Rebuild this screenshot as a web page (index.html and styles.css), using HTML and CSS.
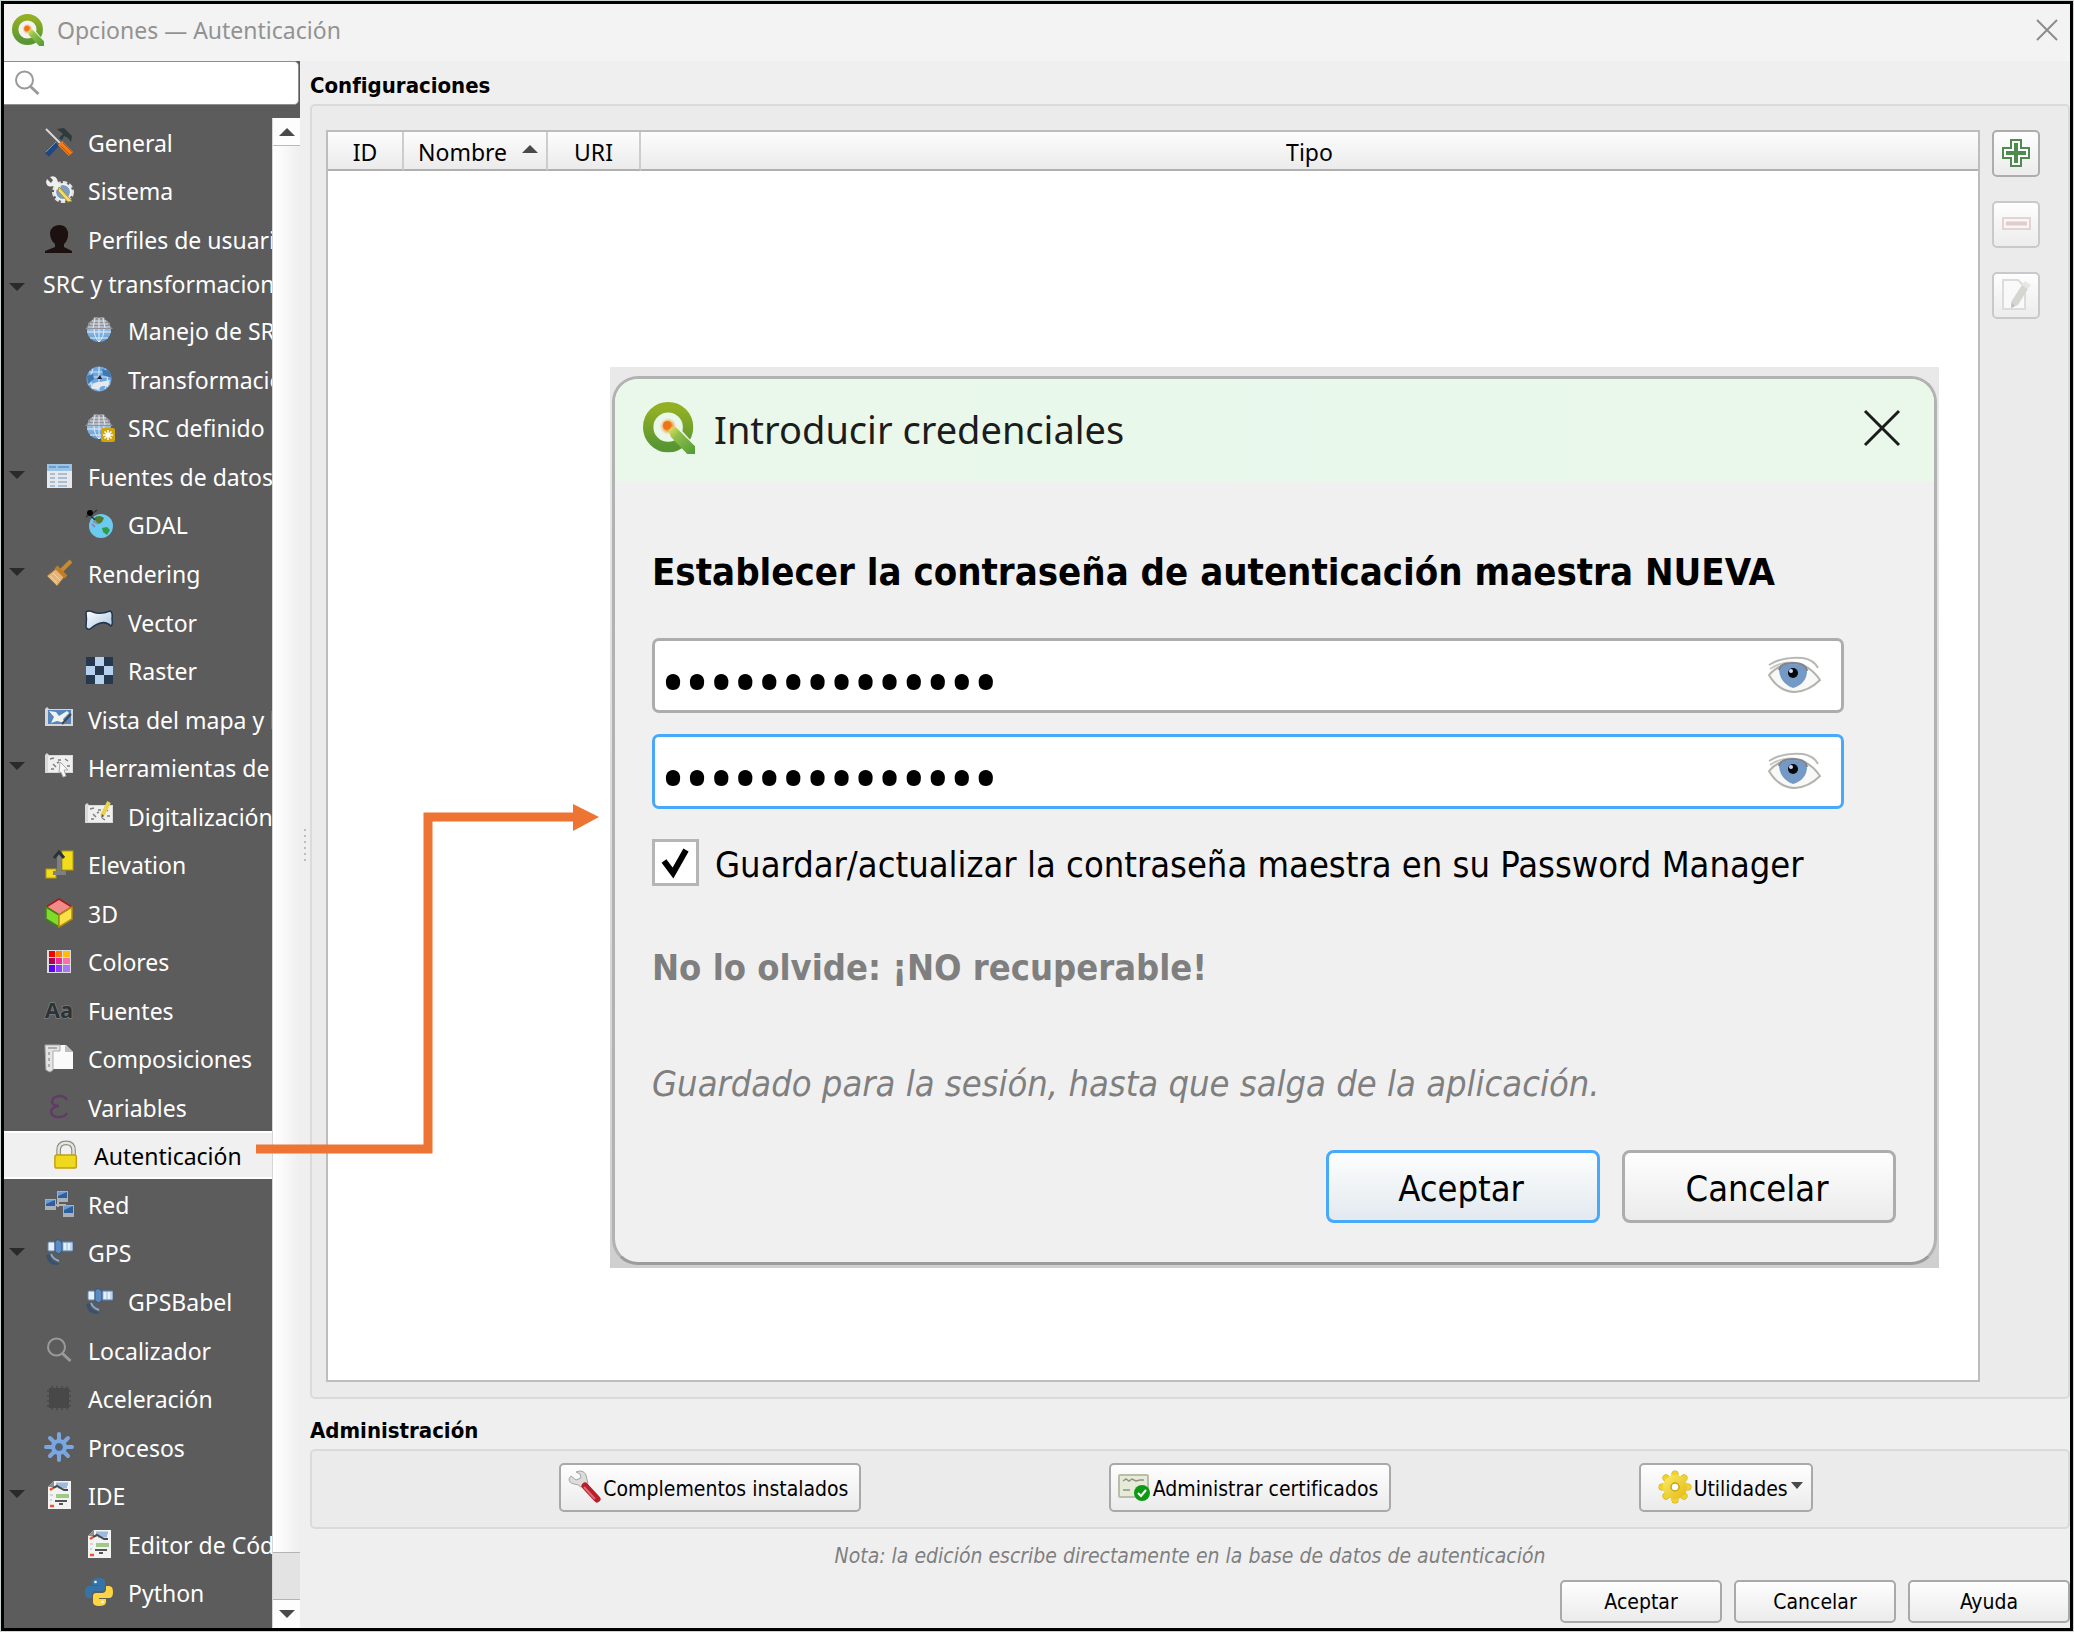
FILE: index.html
```html
<!DOCTYPE html>
<html lang="es">
<head>
<meta charset="utf-8">
<title>Opciones — Autenticación</title>
<link rel="stylesheet" href="styles.css">
</head>
<body>
<svg class="defs" aria-hidden="true">
  <defs>
    <linearGradient id="g-q" x1="0" y1="0" x2="0" y2="1"><stop offset="0" stop-color="#93b023"/><stop offset="1" stop-color="#589632"/></linearGradient>
    <linearGradient id="g-tail" x1="0" y1="0" x2="1" y2="1"><stop offset="0" stop-color="#f7e85a"/><stop offset=".35" stop-color="#8fbf4a"/><stop offset="1" stop-color="#4f9a35"/></linearGradient>
    <radialGradient id="g-spot"><stop offset="0" stop-color="#f07c1d"/><stop offset=".5" stop-color="#f39a4a"/><stop offset="1" stop-color="#f8c98f" stop-opacity="0"/></radialGradient>
    <linearGradient id="g-globe" x1="0" y1="0" x2="0" y2="1"><stop offset="0" stop-color="#c3d9ee"/><stop offset="1" stop-color="#5d9bd6"/></linearGradient>
    <linearGradient id="g-vec" x1="0" y1="0" x2="1" y2="1"><stop offset="0" stop-color="#ffffff"/><stop offset="1" stop-color="#a9c4e2"/></linearGradient>
    <linearGradient id="g-gear" x1="0" y1="0" x2="1" y2="1"><stop offset="0" stop-color="#f8ec6a"/><stop offset="1" stop-color="#e6b90f"/></linearGradient>
    <symbol id="qgis" viewBox="1 1 30 30">
      <circle cx="15.500" cy="15.500" r="11.500" fill="none" stroke="url(#g-q)" stroke-width="6"/>
      <path d="M19 18 26 31h6l-1-5-8-9z" class="qgis-gap"/>
      <circle cx="15.500" cy="15" r="5" fill="url(#g-spot)"/>
      <path d="M15 15 20 15.500 31 26.500V31H26.500L17 21z" fill="url(#g-tail)"/>
      <circle cx="15" cy="14.500" r="2.500" fill="#ee7418"/>
    </symbol>
    <symbol id="globe" viewBox="0 0 28 28">
      <circle cx="14" cy="14" r="12" fill="url(#g-globe)"/>
      <path d="M5 22 23 22M2 16H26M9 13q0 8 5 13M19 13q0 8-5 13M14 13V26" stroke="#e3effa" stroke-width="1" fill="none"/>
      <path d="M0 13 3 10V7l4-2 2-4h4l1 1 1-1h4l2 4 4 2v3l3 3z" fill="#8d929b"/>
      <path d="M3 11H25M5 8H23M7 5H21M10 2 8 12M14 2V12M18 2 20 12" stroke="#dfe2e6" stroke-width="1.200" fill="none"/>
    </symbol>
    <symbol id="sat" viewBox="0 0 28 28">
      <rect x="3" y="4" width="7" height="9" rx="1" fill="#e7f0fa" stroke="#5f87b5" stroke-width="1"/>
      <rect x="17" y="4" width="11" height="9" rx="1" fill="#bcd4ee" stroke="#5f87b5" stroke-width="1"/>
      <path d="M20 5V12M24 5V12" stroke="#f4f9ff" stroke-width="1.500"/>
      <path d="M10 3q3-3 6 0l1 2v8l-3 3-4-2z" fill="#5b88bd" stroke="#2e5684" stroke-width="1"/>
      <path d="M6 16q2 5 8 7" stroke="#86aed8" stroke-width="2" fill="none"/>
      <path d="M1 17q1 10 12 10l1-2q-9-1-9-9z" fill="#39516d"/>
    </symbol>
    <symbol id="script" viewBox="0 0 28 28">
      <path d="M3 6 9 0H26V28H3z" fill="#f3f3f3"/>
      <path d="M3 6 9 0V6z" fill="#8e8e8e"/>
      <path d="M11 3H23M13 6H22" stroke="#9fb9dc" stroke-width="3"/>
      <path d="M8 7 12 5 19 9H23" stroke="#4b4b4b" stroke-width="2" fill="none"/>
      <path d="M11 14H24M11 16H24" stroke="#9dcb85" stroke-width="2"/>
      <path d="M10 20H22M14 23H18" stroke="#555" stroke-width="2"/>
      <path d="M5 9 8 7M5 25H9" stroke="#e8562e" stroke-width="2.500"/>
      <path d="M5 14H8M5 19H7" stroke="#b5b5b5" stroke-width="1"/>
    </symbol>
    <symbol id="lens" viewBox="0 0 28 28">
      <circle cx="11.500" cy="11" r="8.500" fill="none" stroke="#9a9a9a" stroke-width="2"/>
      <path d="M17.500 17.500 25.500 25" stroke="#9a9a9a" stroke-width="3"/>
    </symbol>
    <symbol id="map" viewBox="0 0 28 28">
      <path d="M0 5 2 3 4 5H28V23H0z" fill="#d9d9d9"/>
      <rect x="3" y="6" width="24" height="16" fill="#efefef"/>
      <path d="M5 9 9 8M13 10H16M8 14 11 17M20 9 23 11M6 19H9M17 18 20 20M22 16H25M12 13 14 12" stroke="#7f7f7f" stroke-width="1.500"/>
    </symbol>
    <symbol id="eye" viewBox="0 0 54 40">
      <path d="M2 9Q16 0 36 2 47 4 51 12" fill="none" stroke="#b9b8b4" stroke-width="2"/>
      <path d="M3 13Q14 5 30 7" fill="none" stroke="#c9c8c4" stroke-width="2"/>
      <path d="M2 19Q10 9 26 7 42 8 53 24 42 35 28 36 12 36 2 19z" fill="#f8f8f6" stroke="#b3b2ae" stroke-width="2"/>
      <path d="M12 14Q13 8 26 8T40 16Q39 28 26 32 13 27 12 14z" fill="#7499c6"/>
      <path d="M12 14Q13 7 26 7T40 15" fill="none" stroke="#7e858d" stroke-width="2"/>
      <circle cx="26" cy="17" r="5" fill="#05070a"/>
      <circle cx="24" cy="15" r="2" fill="#cfdded"/>
    </symbol>
  </defs>
</svg>

<div class="window">
  <header class="titlebar">
    <svg class="title-logo"><use href="#qgis"/></svg>
    <h1 class="title">Opciones — Autenticación</h1>
    <button class="close" aria-label="Cerrar"><svg viewBox="0 0 22 22"><path d="M1 1 21 21M21 1 1 21" stroke="#8c8c8c" stroke-width="2"/></svg></button>
  </header>

  <div class="content">
    <aside class="sidebar">
      <div class="search">
        <svg class="ico"><use href="#lens"/></svg>
        <input type="search" aria-label="Buscar opciones">
      </div>
      <div class="tree-wrap">
        <nav class="tree-nav" aria-label="Categorías">
        <ul class="tree">
          <li><a href="#"><svg class="ico" viewBox="0 0 28 28"><path d="M1 1 15 15" stroke="#d9d9d9" stroke-width="2"/><path d="M2 27 12 16" stroke="#1f4880" stroke-width="5.500"/><path d="M1 24 11 14" stroke="#6d97cf" stroke-width="1"/><path d="M12 1 19 0 27 8 26 14 23 10 19 8 17 12 14 10 18 6z" fill="#2f3a3d"/><path d="M15 15 26 26" stroke="#f57c14" stroke-width="6"/><path d="M16 18 25 27M18 15 27 24" stroke="#b9530a" stroke-width="1"/></svg><span>General</span></a></li>
          <li><a href="#"><svg class="ico" viewBox="0 0 28 28"><circle cx="18" cy="16" r="9" fill="#7d9cc2" stroke="#e2e2e2" stroke-width="4" stroke-dasharray="4 2"/><circle cx="18" cy="16" r="8" fill="none" stroke="#efefef" stroke-width="2"/><path d="M2 3 6 7 8 4 5 1Q10-1 12 3 13 8 16 11L13 14 8 10Q2 12 1 6z" fill="#efefef"/><path d="M14 11 27 25 23 26 13 15z" fill="#f2dc6b" stroke="#a48f2c" stroke-width="1"/></svg><span>Sistema</span></a></li>
          <li><a href="#"><svg class="ico" viewBox="0 0 28 28"><path d="M15 0Q24 1 23 11 22 17 19 19V22L27 26V28H0V26L10 22V19Q5 15 5 8 6 0 15 0z" fill="#1c1010"/></svg><span>Perfiles de usuario</span></a></li>
          <li class="short"><i class="fold"></i><a href="#"><span>SRC y transformaciones</span></a></li>
          <li class="child"><a href="#"><svg class="ico"><use href="#globe"/></svg><span>Manejo de SRC</span></a></li>
          <li class="child"><a href="#"><svg class="ico" viewBox="0 0 28 28"><circle cx="14" cy="14" r="12.500" fill="#6fa6dc"/><path d="M2 12H26M4 7H24M3 19H25M14 2V26M8 4Q3 14 8 24M20 4Q25 14 20 24" stroke="#cfe3f6" stroke-width="1.200" fill="none"/><path d="M2 11 8 9 9 14 3 19zM17 4 25 6 26 13 18 10z" fill="#3f78b3"/><path d="M6 23Q8 16 15 17L25 15 23 22Q16 19 13 25z" fill="#e4e9ee"/><path d="M12 14 15 10 17 14z" fill="#223"/></svg><span>Transformaciones</span></a></li>
          <li class="child"><a href="#"><svg class="ico" viewBox="0 0 28 28"><use href="#globe" width="28" height="28"/><rect x="16" y="15" width="14" height="14" rx="2" fill="#d0a50c"/><path d="M23 17V27M18 22H28M19.500 18.500 26.500 25.500M26.500 18.500 19.500 25.500" stroke="#fff" stroke-width="1.500"/><circle cx="23" cy="22" r="2" fill="#fff"/></svg><span>SRC definido por</span></a></li>
          <li><i class="fold"></i><a href="#"><svg class="ico" viewBox="0 0 28 28"><rect x="2" y="2" width="25" height="24" fill="#e6e8eb"/><rect x="2" y="2" width="25" height="7" fill="#9cc3e6"/><path d="M4 5H11M13 5H24" stroke="#5b93c6" stroke-width="1.500"/><path d="M5 12H10M5 16H10M5 20H10M5 24H10M13 12H22M13 16H22M13 20H22M13 24H22" stroke="#a9bed3" stroke-width="2"/></svg><span>Fuentes de datos</span></a></li>
          <li class="child"><a href="#"><svg class="ico" viewBox="0 0 28 28"><circle cx="16" cy="16" r="12" fill="#6cc9f0"/><path d="M9 8Q14 4 19 8L17 12 14 14 11 12z" fill="#4d7d2a"/><path d="M17 18 22 17 25 20 22 25 18 22z" fill="#2f9b45"/><path d="M7 14 10 17M8 11 13 14" stroke="#9a86a6" stroke-width="2"/><circle cx="5" cy="3" r="3" fill="#000"/><path d="M1 7 3 5M8 3 12 0M6 6 10 10" stroke="#333" stroke-width="1.500"/></svg><span>GDAL</span></a></li>
          <li><i class="fold"></i><a href="#"><svg class="ico" viewBox="0 0 28 28"><path d="M16 12 26 2" stroke="#c98a2b" stroke-width="4"/><path d="M12 9 20 17 12 27 2 17z" fill="#e4b577" stroke="#a9742b" stroke-width="1"/><path d="M11 8 21 18" stroke="#c07d24" stroke-width="4"/><path d="M5 17 12 24M8 14 15 21" stroke="#f3d3a4" stroke-width="1"/></svg><span>Rendering</span></a></li>
          <li class="child"><a href="#"><svg class="ico" viewBox="0 0 28 28"><path d="M1 4Q4 2 8 4 15 7 25 3 28 4 27 11 28 17 26 18 18 10 5 21 2 22 1 19 2 11 1 4z" fill="url(#g-vec)" stroke="#22364f" stroke-width="1.500"/></svg><span>Vector</span></a></li>
          <li class="child"><a href="#"><svg class="ico" viewBox="0 0 28 28"><rect x="1" y="1" width="27" height="27" fill="#b7d0ee"/><path d="M1 1H10V10H1zM19 1H28V10H19zM10 10H19V19H10zM1 19H10V28H1zM19 19H28V28H19z" fill="#26384f"/></svg><span>Raster</span></a></li>
          <li><a href="#"><svg class="ico" viewBox="0 0 28 28"><path d="M0 4 2 2 4 4H28V21H0z" fill="#d6d6d6"/><rect x="3" y="5" width="23" height="14" fill="#5586bd"/><path d="M4 6 11 7 14 11 22 6 24 8 18 14 20 18 12 16 6 18 9 12z" fill="#f2f2f2"/><path d="M17 19 26 9" stroke="#444" stroke-width="2"/></svg><span>Vista del mapa y leyenda</span></a></li>
          <li><i class="fold"></i><a href="#"><svg class="ico" viewBox="0 0 28 28"><use href="#map" y="-3" width="28" height="28"/><path d="M15 9 23 17H19L21 23 18 24 16 19 14 20z" fill="#f8f8f8" stroke="#aaa" stroke-width="1"/></svg><span>Herramientas de mapa</span></a></li>
          <li class="child"><a href="#"><svg class="ico" viewBox="0 0 28 28"><use href="#map" y="-2" width="28" height="28"/><path d="M17 14 24 0" stroke="#e7d24a" stroke-width="4"/><path d="M16 16 17 12 19 14z" fill="#555"/></svg><span>Digitalización</span></a></li>
          <li><a href="#"><svg class="ico" viewBox="0 0 28 28"><rect x="17" y="1" width="11" height="19" fill="#f2dc1b" stroke="#b59d0d" stroke-width="1"/><rect x="1" y="19" width="10" height="9" fill="#f2dc1b" stroke="#b59d0d" stroke-width="1"/><path d="M14 3V22M8 23H21" stroke="#7c8085" stroke-width="4"/><path d="M9 8 14 2 19 8" fill="none" stroke="#2c3236" stroke-width="3"/></svg><span>Elevation</span></a></li>
          <li><a href="#"><svg class="ico" viewBox="0 0 28 28"><path d="M14 0 27 8 14 16 1 8z" fill="#f38a8a" stroke="#a31b1b" stroke-width="1.500"/><path d="M1 8 14 16V28L1 20z" fill="#7fdb2d" stroke="#3d8a10" stroke-width="1.500"/><path d="M27 8 14 16V28L27 20z" fill="#fbe147" stroke="#b38b10" stroke-width="1.500"/></svg><span>3D</span></a></li>
          <li><a href="#"><svg class="ico" viewBox="0 0 28 28"><rect x="2" y="3" width="24" height="23" fill="#dcdcdc"/><path d="M4 4h6v6H4z" fill="#f00"/><path d="M11 4h6v6h-6z" fill="#ff7f00"/><path d="M18 4h7v6h-7z" fill="#ffbf00"/><path d="M4 11h6v6H4z" fill="#b0004b"/><path d="M11 11h6v6h-6z" fill="#ee2a9b"/><path d="M18 11h7v6h-7z" fill="#ff6fae"/><path d="M4 18h6v7H4z" fill="#5a00ff"/><path d="M11 18h6v7h-6z" fill="#8f40ff"/><path d="M18 18h7v7h-7z" fill="#a878f5"/></svg><span>Colores</span></a></li>
          <li><a href="#"><svg class="ico" viewBox="0 0 28 28" aria-hidden="true"><text class="glyph-aa" x="14" y="22" text-anchor="middle">Aa</text></svg><span>Fuentes</span></a></li>
          <li><a href="#"><svg class="ico" viewBox="0 0 28 28"><path d="M4 1H21L28 8V25H4z" fill="#fafafa"/><path d="M20 1V8H28z" fill="#bdbdbd"/><path d="M0 1H15V7H8V26L5 28 1 26z" fill="#e4e4e4" stroke="#a9a9a9" stroke-width="1"/><path d="M3 4H12M4 8V11M4 14V17M4 20V23" stroke="#9b9b9b" stroke-width="1.500"/></svg><span>Composiciones</span></a></li>
          <li><a href="#"><svg class="ico" viewBox="0 0 28 28" aria-hidden="true"><path d="M22 7Q20 3 14 3 7 4 7 9 8 13 14 13 6 14 6 19 7 24 14 24 20 24 22 20" fill="none" stroke="#613a69" stroke-width="2.500"/></svg><span>Variables</span></a></li>
          <li class="selected"><a href="#" aria-current="page"><svg class="ico" viewBox="0 0 28 30"><path d="M5 15V10Q5 2 13 2T21 10V15" fill="none" stroke="#8d8d86" stroke-width="5"/><path d="M5 15V10Q5 2 13 2T21 10V15" fill="none" stroke="#e6e6e0" stroke-width="2.500"/><rect x="1" y="15" width="23" height="14" rx="2" fill="#efd91f" stroke="#c29e0c" stroke-width="1.500"/></svg><span>Autenticación</span></a></li>
          <li><a href="#"><svg class="ico" viewBox="0 0 28 28"><path d="M13 9V17M7 15H20V20" stroke="#b5b5b5" stroke-width="2" fill="none"/><path d="M12 1H23V12H12zM0 9H11V20H0zM18 15H29V27H18z" fill="#aab0b5"/><path d="M13 2H22V8H13zM1 10H10V16H1zM19 16H28V23H19z" fill="#2c5f9f"/><path d="M13 2H22L13 6zM1 10H10L1 14zM19 16H28L19 20z" fill="#6e9bcf"/></svg><span>Red</span></a></li>
          <li><i class="fold"></i><a href="#"><svg class="ico"><use href="#sat"/></svg><span>GPS</span></a></li>
          <li class="child"><a href="#"><svg class="ico"><use href="#sat"/></svg><span>GPSBabel</span></a></li>
          <li><a href="#"><svg class="ico"><use href="#lens"/></svg><span>Localizador</span></a></li>
          <li><a href="#"><svg class="ico" viewBox="0 0 28 28"><rect x="4" y="4" width="20" height="20" fill="#484848"/><path d="M7 2V26M12 2V26M17 2V26M22 2V26M2 7H26M2 12H26M2 17H26M2 22H26" stroke="#484848" stroke-width="1.500"/></svg><span>Aceleración</span></a></li>
          <li><a href="#"><svg class="ico" viewBox="0 0 28 28"><path d="M14 1V27M1 14H27M5 5 23 23M23 5 5 23" stroke="#7ba7de" stroke-width="4" stroke-linecap="round"/><circle cx="14" cy="14" r="8" fill="#7ba7de"/><circle cx="14" cy="14" r="3.500" fill="#5c5c5c" stroke="#3e6ba5" stroke-width="1"/></svg><span>Procesos</span></a></li>
          <li><i class="fold"></i><a href="#"><svg class="ico"><use href="#script"/></svg><span>IDE</span></a></li>
          <li class="child"><a href="#"><svg class="ico"><use href="#script"/></svg><span>Editor de Código</span></a></li>
          <li class="child"><a href="#"><svg class="ico" viewBox="0 0 28 28"><path d="M14 0Q7 0 7 4V7H14V8H4Q0 8 0 14T4 20H7V17Q7 13 11 13H17Q20 13 20 10V4Q20 0 14 0z" fill="#3674a8"/><path d="M14 28Q21 28 21 24V21H14V20H24Q28 20 28 14T24 8H21V11Q21 15 17 15H11Q8 15 8 18V24Q8 28 14 28z" fill="#ffd544"/><circle cx="10.500" cy="4" r="1.300" fill="#fff"/><circle cx="17.500" cy="24" r="1.300" fill="#fff"/></svg><span>Python</span></a></li>
        </ul>
        </nav>
        <div class="scrollbar" aria-hidden="true">
          <span class="step"><i class="up"></i></span>
          <span class="thumb"></span>
          <span class="groove"></span>
          <span class="step last"><i class="down"></i></span>
        </div>
      </div>
    </aside>
    <div class="splitter" aria-hidden="true"><i></i><i></i><i></i><i></i><i></i><i></i></div>

    <main class="page">
      <h2 class="group-title">Configuraciones</h2>
      <section class="group configs">
        <div class="table-box">
          <table>
            <colgroup><col class="c-id"><col class="c-name"><col class="c-uri"><col></colgroup>
            <thead><tr><th>ID</th><th><span class="sorted">Nombre <i class="up"></i></span></th><th>URI</th><th>Tipo</th></tr></thead>
            <tbody></tbody>
          </table>
        </div>
        <div class="tools">
          <button class="tool" aria-label="Añadir"><svg viewBox="0 0 30 30"><path d="M10 2H20V10H28V20H20V28H10V20H2V10H10z" fill="#fff" stroke="#4f8a51" stroke-width="2"/><path d="M15 5V25M5 15H25" stroke="#4f8a51" stroke-width="4"/></svg></button>
          <button class="tool" aria-label="Quitar" disabled><svg viewBox="0 0 30 30"><rect x="2" y="9" width="27" height="11" fill="#fbf6f6" stroke="#e3d3d3" stroke-width="2"/><path d="M5 14.500H26" stroke="#dfcdcd" stroke-width="4"/></svg></button>
          <button class="tool" aria-label="Editar" disabled><svg viewBox="0 0 30 30"><path d="M2 0H17L24 7V29H2z" fill="#f9f9f9" stroke="#dcdcdc" stroke-width="2"/><path d="M10 22 21 5 27 9 17 25 10 28z" fill="#d6d6d0"/><path d="M21 5 24 1 30 5 27 9z" fill="#e6e6e3"/><path d="M10 28 11 23 14 26z" fill="#bdbdbd"/></svg></button>
        </div>
      </section>

      <h2 class="group-title">Administración</h2>
      <section class="group admin">
        <button class="btn"><svg class="bico" viewBox="0 0 32 32"><path d="M1 8 3 5 8 9 13 7 12 3 8 1Q15-2 18 4 19 9 20 12L13 16Q10 13 6 13 1 12 1 8z" fill="#dcdcda" stroke="#a5a5a0" stroke-width="1"/><path d="M17 15 29 28" stroke="#b5202c" stroke-width="7" stroke-linecap="round"/><path d="M16 16 27 28" stroke="#df6a70" stroke-width="2"/></svg>Complementos instalados</button>
        <button class="btn"><svg class="bico" viewBox="0 0 32 32"><rect x="1" y="4" width="29" height="22" rx="1" fill="#e6ead8" stroke="#b9bda9" stroke-width="2"/><path d="M5 10 8 8 11 10 14 8 18 10 22 9H26M5 19H12" stroke="#8f9482" stroke-width="1.500" fill="none"/><circle cx="24" cy="22" r="8" fill="#0b9a12"/><path d="M20 22 23 25 28 19" stroke="#fff" stroke-width="2" fill="none"/></svg>Administrar certificados</button>
        <button class="btn menu"><svg class="bico" viewBox="0 0 32 32"><path d="M16 3V29M3 16H29M7 7 25 25M25 7 7 25" stroke="#cfa512" stroke-width="7" stroke-linecap="round"/><path d="M16 3V29M3 16H29M7 7 25 25M25 7 7 25" stroke="#f0d22c" stroke-width="6" stroke-linecap="round"/><circle cx="16" cy="16" r="12" fill="url(#g-gear)"/><circle cx="16" cy="16" r="4" fill="#fff" stroke="#c9a215" stroke-width="1.500"/></svg>Utilidades<i class="down"></i></button>
      </section>
      <p class="note">Nota: la edición escribe directamente en la base de datos de autenticación</p>
      <footer class="actions">
        <button class="btn wide">Aceptar</button>
        <button class="btn wide">Cancelar</button>
        <button class="btn wide">Ayuda</button>
      </footer>
    </main>
  </div>

  <svg class="pointer" viewBox="0 0 343 350" aria-hidden="true"><path d="M0 346H172V14H320" fill="none" stroke="#ed7433" stroke-width="9"/><path d="M317 1 343 14 317 28z" fill="#ed7433"/></svg>

  <div class="dialog-shot">
    <form class="dialog" role="dialog" aria-labelledby="dlg-title">
      <div class="dlg-head">
        <svg class="dlg-logo"><use href="#qgis"/></svg>
        <h2 class="dlg-title" id="dlg-title">Introducir credenciales</h2>
        <button type="button" class="dlg-close" aria-label="Cerrar"><svg viewBox="0 0 36 36"><path d="M1 1 35 35M35 1 1 35" stroke="#1c1c1c" stroke-width="3"/></svg></button>
      </div>
      <div class="dlg-body">
        <p class="dlg-strong">Establecer la contraseña de autenticación maestra NUEVA</p>
        <div class="field"><input type="password" value="contrasena1234" aria-label="Contraseña maestra"><svg class="eye"><use href="#eye"/></svg></div>
        <div class="field focus"><input type="password" value="contrasena1234" aria-label="Repetir contraseña maestra"><svg class="eye"><use href="#eye"/></svg></div>
        <div class="check"><input type="checkbox" id="save" checked><label for="save">Guardar/actualizar la contraseña maestra en su Password Manager</label></div>
        <p class="dlg-warn">No lo olvide: ¡NO recuperable!</p>
        <p class="dlg-hint">Guardado para la sesión, hasta que salga de la aplicación.</p>
        <div class="dlg-actions">
          <button type="button" class="dlg-btn primary">Aceptar</button>
          <button type="button" class="dlg-btn">Cancelar</button>
        </div>
      </div>
    </form>
  </div>
</div>
</body>
</html>
```
FILE: styles.css
```css
:root {
  --ui: "Noto Sans", "Open Sans", sans-serif;
  --qt: "DejaVu Sans Condensed", "DejaVu Sans", sans-serif;
  --line: #b4b4b4;
  --dark: #5c5c5c;
}
* { box-sizing: border-box; }
body { margin: 0; padding: 1px; background: #cdd6d2; font-family: var(--ui); font-size: 23px; color: #000; }
h1, h2, p, ul { margin: 0; padding: 0; font-weight: normal; }
button, input { font: inherit; color: inherit; margin: 0; }
svg { display: block; flex: none; overflow: visible; }
.defs { position: absolute; width: 0; height: 0; }
.qgis-gap { fill: #f0f6ee; }

.window { position: relative; display: flex; flex-direction: column; min-height: calc(100vh - 2px); border: 3px solid #000; background: #efefef; }

.titlebar { display: flex; align-items: center; height: 57px; padding: 0 12px 0 8px; background: #f3f3f3; color: #929292; }
.title-logo { width: 32px; height: 32px; margin-bottom: 6px; }
.title { flex: 1; margin-left: 13px; font-size: 23px; line-height: 32px; margin-bottom: 6px; }
.close { width: 22px; height: 22px; padding: 0; border: 0; background: none; margin-bottom: 6px; }

.content { flex: 1; display: flex; }

.sidebar { width: 296px; display: flex; flex-direction: column; background: var(--dark); }
.search { display: flex; align-items: center; height: 44px; margin-right: 1px; padding-left: 9px; background: #fff; border: 1px solid #8f8f8f; border-width: 1px 1px 1px 0; border-radius: 0 5px 5px 0; }
.search input { flex: 1; min-width: 0; border: 0; outline: 0; background: none; }
.ico { width: 28px; height: 28px; }
.tree-wrap { flex: 1; display: flex; }
.tree-nav { flex: 1; min-width: 0; overflow: hidden; display: flex; }
.tree { flex: 1; min-width: 0; display: flex; flex-direction: column; padding: 12px 0; list-style: none; color: #fff; }
.tree li { flex: 1 0 48px; display: flex; align-items: center; position: relative; }
.tree .short { flex: 0 0 43px; }
.tree a { flex: 1; min-width: 0; display: flex; align-items: center; gap: 15px; padding: 3px 0 0 41px; color: inherit; text-decoration: none; white-space: nowrap; line-height: 32px; }
.tree a .ico { margin-bottom: 2px; }
.tree .short a { padding: 0 0 0 39px; }
.tree .child a { padding-left: 81px; }
.tree .selected { background: #f0f0f0; color: #000; box-shadow: inset 0 2px #fff, inset 0 -2px #fff; }
.tree .selected a { padding-left: 49px; gap: 13px; }
.fold { position: absolute; left: 5px; top: 20px; border: 8px solid transparent; border-top-color: #2a2a2a; border-bottom: 0; }
.glyph-aa { font: bold 22px var(--ui); fill: #2b3335; stroke: #8b8f90; stroke-width: 1px; paint-order: stroke; }

.scrollbar { width: 28px; margin-top: 13px; display: flex; flex-direction: column; background: linear-gradient(90deg, #fff, #efefef); border-left: 1px solid #d6d6d6; }
.step { height: 28px; display: flex; align-items: center; justify-content: center; background: #fdfdfd; border-bottom: 1px solid #b9b9b9; }
.step.last { border: 0; }
.thumb { flex: 1; }
.groove { height: 48px; background: #e3e3e3; border: 1px solid var(--line); border-width: 1px 0; }
.up, .down { border: 8px solid transparent; }
.up { border-bottom-color: #4a4a4a; border-top: 0; }
.down { border-top-color: #4a4a4a; border-bottom: 0; }

.splitter { width: 10px; display: flex; flex-direction: column; align-items: center; justify-content: center; gap: 4px; }
.splitter i { width: 2px; height: 2px; background: #bdbdbd; }

.page { flex: 1; min-width: 0; display: flex; flex-direction: column; font-family: var(--qt); }
.group-title { height: 43px; padding-top: 10px; font-size: 22px; line-height: 30px; font-weight: bold; }
.group { background: #ebebeb; border: 2px solid #dadada; border-radius: 5px; }
.configs { flex: 1; display: flex; gap: 12px; padding: 24px 28px 15px 14px; }
.table-box { flex: 1; min-width: 0; background: #fff; border: 2px solid #bdbdbd; }
table { width: 100%; table-layout: fixed; border-collapse: separate; border-spacing: 0; font-family: var(--ui); }
.c-id { width: 76px; }
.c-name { width: 144px; }
.c-uri { width: 93px; }
th { height: 39px; padding: 3px 0 0; font-weight: normal; line-height: 32px; background: linear-gradient(#fdfdfd, #ebebeb); border-right: 2px solid #cdcdcd; border-bottom: 2px solid #b0b0b0; }
th:last-child { border-right: 0; }
.sorted { display: flex; align-items: center; justify-content: space-between; padding: 0 8px 0 14px; }
.sorted .up { margin-bottom: 6px; }
.tools { display: flex; flex-direction: column; gap: 24px; }
.tool { width: 48px; height: 47px; padding: 0; display: flex; align-items: center; justify-content: center; background: linear-gradient(#fefefe, #ececec); border: 2px solid #adadad; border-radius: 5px; }
.tool svg { width: 30px; height: 30px; margin-bottom: 2px; }
.tool:disabled { border-color: #c9c9c9; }

.configs + .group-title { height: 50px; padding-top: 17px; }
.admin { display: flex; justify-content: space-evenly; align-items: flex-start; padding: 12px 8px 15px 0; }
.btn { height: 49px; padding: 2px 11px 0 7px; display: flex; align-items: center; justify-content: center; gap: 3px; font-size: 21px; white-space: nowrap; background: linear-gradient(#fefefe, #ebebeb); border: 2px solid #a9a9a9; border-radius: 5px; }
.bico { width: 32px; height: 32px; margin-bottom: 4px; }
.menu { padding: 2px 8px 0 18px; }
.menu .down { border-width: 7px 6px 0; margin-bottom: 6px; }
.note { padding: 12px 0 9px; text-align: center; font-style: italic; font-size: 21px; line-height: 30px; color: #7f7f7f; }
.actions { display: flex; justify-content: flex-end; gap: 12px; padding-bottom: 5px; }
.btn.wide { width: 162px; height: 43px; padding: 0; }

/* Callout arrow and the floating credentials window */
.pointer { position: absolute; left: 252px; top: 799px; width: 343px; height: 350px; }
.dialog-shot { position: absolute; left: 606px; top: 363px; width: 1329px; padding: 9px 2px 3px; background: linear-gradient(#e9e9e9, #cfcfcf); }
.dialog { overflow: hidden; border: 3px solid #b2b2b2; border-bottom-color: #9c9c9c; border-radius: 26px; background: #f0f0f0; font-family: var(--qt); font-size: 36px; line-height: 44px; }
.dlg-head { display: flex; align-items: center; height: 103px; padding: 0 34px 0 27px; background: linear-gradient(90deg, #eaf8ea, #e8f8ec 50%, #eaf8ea); font-family: var(--ui); }
.dlg-logo { width: 54px; height: 52px; margin-bottom: 6px; }
.dlg-title { flex: 1; margin: 0 0 4px 18px; font-size: 38px; color: #1c1c1c; }
.dlg-close { width: 36px; height: 36px; padding: 0; border: 0; background: none; margin-bottom: 6px; }
.dlg-body { display: flex; flex-direction: column; padding: 68px 38px 39px 37px; }
.dlg-strong { font-size: 38px; font-weight: bold; margin-bottom: 44px; white-space: nowrap; }
.field { display: flex; align-items: center; height: 75px; margin: 0 52px 21px 0; padding: 0 20px 0 6px; background: #fff; border: 3px solid #adadad; border-radius: 7px; }
.field.focus { border-color: #48a9fb; margin-bottom: 28px; }
.field input { flex: 1; min-width: 0; height: 69px; padding: 10px 0 0; border: 0; outline: 0; background: none; font-family: var(--ui); font-size: 64px; line-height: 59px; }
.eye { width: 54px; height: 40px; }
.check { display: flex; align-items: center; gap: 16px; white-space: nowrap; }
.check label { padding-top: 6px; }
.check input { appearance: none; width: 47px; height: 47px; background: #fff url("data:image/svg+xml,%3Csvg xmlns='http://www.w3.org/2000/svg' viewBox='0 0 41 41'%3E%3Cpath d='M9 19 18 31 31 8' fill='none' stroke='%23000' stroke-width='6'/%3E%3C/svg%3E"); border: 3px solid #b5b5b5; }
.dlg-warn { margin-top: 59px; font-weight: bold; color: #7f7f7f; }
.dlg-hint { margin-top: 72px; font-style: italic; color: #7f7f7f; }
.dlg-actions { display: flex; justify-content: flex-end; gap: 22px; margin-top: 44px; }
.dlg-btn { width: 274px; height: 73px; padding: 4px 4px 0 0; background: linear-gradient(#fefefe, #ebebeb); border: 3px solid #adadad; border-radius: 8px; }
.dlg-btn.primary { border-color: #48a9fb; background: linear-gradient(#fdfefe, #e2e9ef); }
```
